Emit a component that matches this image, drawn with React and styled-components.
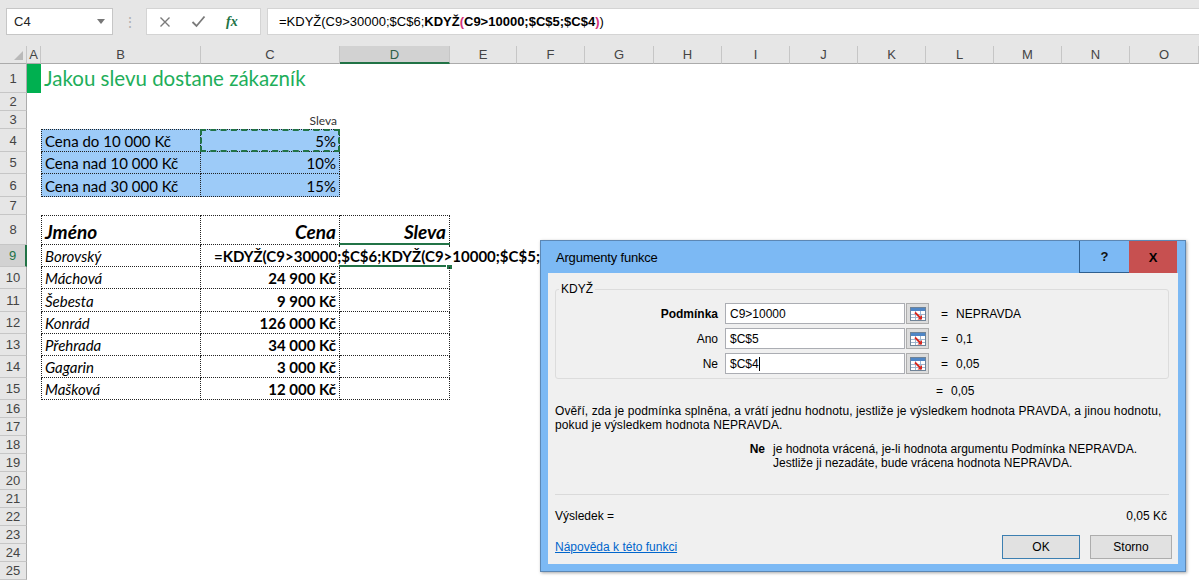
import React from 'react'
import styled, { createGlobalStyle, css } from 'styled-components'

const GlobalStyle = createGlobalStyle`
  html, body { margin: 0; padding: 0; background: #fff; overflow: hidden; }
  body { font-family: "Liberation Sans", Arial, sans-serif; }
`

const COLS = ['A', 'B', 'C', 'D', 'E', 'F', 'G', 'H', 'I', 'J', 'K', 'L', 'M', 'N', 'O']
const COL_WIDTHS = [14, 160, 139, 110, 67, 68, 69, 68, 68, 68, 68, 68, 68, 68, 69]
const ROW_HEIGHTS = [29, 18, 18, 23, 22, 23, 18, 30, 22, 22, 23, 22, 22, 22, 22, 18, 18, 18, 18, 18, 18, 18, 18, 18, 18]
const GREEN = '#217346'
const col = (letter) => COLS.indexOf(letter) + 2

const discounts = [
  ['Cena do 10 000 Kč', '5%'],
  ['Cena nad 10 000 Kč', '10%'],
  ['Cena nad 30 000 Kč', '15%'],
]

const customers = [
  ['Borovský', ''],
  ['Máchová', '24 900 Kč'],
  ['Šebesta', '9 900 Kč'],
  ['Konrád', '126 000 Kč'],
  ['Přehrada', '34 000 Kč'],
  ['Gagarin', '3 000 Kč'],
  ['Mašková', '12 000 Kč'],
]

const Page = styled.div`
  position: relative;
  width: 1199px;
  height: 583px;
  overflow: hidden;
  display: flex;
  flex-direction: column;
  background: #fff;
`

/* formula bar */
const FormulaBar = styled.div`
  flex: none;
  height: 46px;
  box-sizing: border-box;
  padding: 8px 0 0 6px;
  display: flex;
  align-items: flex-start;
  background: #e6e6e6;
`
const NameBox = styled.div`
  width: 107px;
  height: 27px;
  box-sizing: border-box;
  display: flex;
  align-items: center;
  justify-content: space-between;
  padding: 0 7px 0 7px;
  background: #fff;
  border: 1px solid #c6c6c6;
  font-size: 13px;
  color: #222;
`
const Caret = styled.span`
  width: 0;
  height: 0;
  border-left: 4px solid transparent;
  border-right: 4px solid transparent;
  border-top: 5px solid #777;
`
const Grip = styled.div`
  width: 33px;
  height: 27px;
  display: flex;
  align-items: center;
  justify-content: center;
  color: #b0b0b0;
  font-size: 14px;
`
const FxBox = styled.div`
  width: 115px;
  height: 27px;
  box-sizing: border-box;
  display: flex;
  align-items: center;
  padding-left: 12px;
  gap: 20px;
  background: #fff;
  border: 1px solid #d4d4d4;
`
const Fx = styled.span`
  font-family: "Liberation Serif", serif;
  font-style: italic;
  font-weight: 700;
  font-size: 14px;
  color: ${GREEN};
`
const FormulaInput = styled.div`
  flex: 1;
  height: 27px;
  margin-left: 6px;
  box-sizing: border-box;
  display: flex;
  align-items: center;
  padding-left: 11px;
  background: #fff;
  border: 1px solid #d4d4d4;
  border-right: none;
  font-size: 13px;
  color: #000;
  white-space: nowrap;
`
const Strong = styled.b`
  color: ${(p) => p.$color || 'inherit'};
`

/* sheet */
const Sheet = styled.div`
  flex: 1;
  display: grid;
  grid-template-columns: 27px ${COL_WIDTHS.map((w) => w + 'px').join(' ')};
  grid-template-rows: 18px ${ROW_HEIGHTS.map((h) => h + 'px').join(' ')};
  overflow: hidden;
`
const Corner = styled.div`
  grid-column: 1;
  grid-row: 1;
  position: relative;
  background: #e6e6e6;
  border-right: 1px solid #c6c6c6;
  border-bottom: 1px solid #ababab;
  &::after {
    content: '';
    position: absolute;
    right: 3px;
    bottom: 3px;
    border-left: 9px solid transparent;
    border-bottom: 9px solid #b9b9b9;
  }
`
const ColHead = styled.div`
  grid-row: 1;
  grid-column: ${(p) => p.$col};
  box-sizing: border-box;
  display: flex;
  align-items: center;
  justify-content: center;
  font-size: 13px;
  color: ${(p) => (p.$active ? '#2f5f47' : '#444')};
  background: ${(p) => (p.$active ? '#d2d2d2' : '#e6e6e6')};
  border-right: 1px solid #c6c6c6;
  border-bottom: ${(p) => (p.$active ? `2px solid ${GREEN}` : '1px solid #ababab')};
`
const RowHead = styled.div`
  grid-column: 1;
  grid-row: ${(p) => p.$row + 1};
  box-sizing: border-box;
  display: flex;
  align-items: center;
  justify-content: center;
  font-size: 13px;
  color: ${(p) => (p.$active ? GREEN : '#444')};
  background: ${(p) => (p.$active ? '#d2d2d2' : '#e6e6e6')};
  border-bottom: 1px solid #c6c6c6;
  border-right: ${(p) => (p.$active ? `2px solid ${GREEN}` : '1px solid #ababab')};
`
const Cell = styled.div`
  grid-column: ${(p) => p.$col} / span ${(p) => p.$span || 1};
  grid-row: ${(p) => p.$row + 1};
  position: relative;
  box-sizing: border-box;
  min-width: 0;
  display: flex;
  align-items: ${(p) => (p.$middle ? 'center' : 'flex-end')};
  justify-content: ${(p) => (p.$right ? 'flex-end' : 'flex-start')};
  padding: 0 3px 1px 3px;
  white-space: nowrap;
  font-family: Lato, "Open Sans", sans-serif;
  font-size: ${(p) => p.$size || 15}px;
  font-weight: ${(p) => (p.$bold ? 700 : 400)};
  font-style: ${(p) => (p.$italic ? 'italic' : 'normal')};
  color: ${(p) => p.$color || '#000'};
  background: ${(p) => p.$fill || 'transparent'};
  ${(p) => p.$box && css`
    border-right: 1px dotted #222;
    border-bottom: 1px dotted #222;
  `}
  ${(p) => p.$first && css`border-left: 1px dotted #222;`}
  ${(p) => p.$top && css`border-top: 1px dotted #222;`}
  ${(p) => p.$marquee && css`
    &::after {
      content: '';
      position: absolute;
      inset: -1px -1px -1px -1px;
      border: 2px dashed ${GREEN};
    }
  `}
  ${(p) => p.$active && css`
    &::before {
      content: '';
      position: absolute;
      left: -1px;
      right: -1px;
      top: -2px;
      bottom: -1px;
      border-top: 2px solid ${GREEN};
      border-bottom: 2px solid ${GREEN};
    }
    &::after {
      content: '';
      position: absolute;
      right: -4px;
      bottom: -4px;
      width: 5px;
      height: 5px;
      background: ${GREEN};
      border: 1px solid #fff;
    }
  `}
`
const Marker = styled.div`
  grid-column: 2;
  grid-row: 2;
  background: #00b050;
`
const EditText = styled.div`
  grid-column: ${col('C')} / span 4;
  grid-row: 10;
  z-index: 2;
  margin: 2px 45px 2px 10px;
  padding-left: 3px;
  display: flex;
  align-items: flex-end;
  background: #fff;
  white-space: nowrap;
  overflow: hidden;
  font-family: Lato, "Open Sans", sans-serif;
  font-weight: 700;
  font-size: 15px;
`

/* dialog */
const Dialog = styled.div`
  position: absolute;
  left: 540px;
  top: 240px;
  width: 646px;
  height: 332px;
  box-sizing: border-box;
  display: flex;
  flex-direction: column;
  padding: 0 7px 7px 7px;
  background: #7cb9f4;
  border: 1px solid #5c87b4;
  box-shadow: 1px 1px 3px rgba(0, 0, 0, 0.35);
  z-index: 5;
  font-size: 12px;
  color: #000;
`
const TitleBar = styled.div`
  height: 32px;
  display: flex;
  align-items: stretch;
`
const Title = styled.div`
  flex: 1;
  display: flex;
  align-items: center;
  padding-left: 8px;
  font-size: 13px;
  letter-spacing: -0.2px;
`
const TitleButton = styled.div`
  width: ${(p) => (p.$close ? 48 : 50)}px;
  margin-right: ${(p) => (p.$close ? 1 : 0)}px;
  display: flex;
  align-items: center;
  justify-content: center;
  font-weight: 700;
  font-size: 13px;
  color: ${(p) => (p.$close ? '#000' : '#111')};
  background: ${(p) => (p.$close ? '#c75050' : 'transparent')};
  ${(p) => !p.$close && css`
    border-left: 1px solid #2f5f8f;
    border-bottom: 1px solid #2f5f8f;
    box-sizing: border-box;
  `}
`
const Body = styled.div`
  flex: 1;
  display: flex;
  flex-direction: column;
  background: #f0f0f0;
  padding: 0 9px 0 7px;
`
const Group = styled.fieldset`
  margin: 9px 0 0 0;
  padding: 7px 0 4px 0;
  border: 1px solid #dcdcdc;
  border-radius: 3px;
  min-width: 0;
`
const Legend = styled.legend`
  margin-left: 3px;
  padding: 0 2px;
  font-size: 12px;
`
const ArgRow = styled.div`
  display: flex;
  align-items: center;
  height: 21px;
  & + & {
    margin-top: 4px;
  }
`
const ArgLabel = styled.div`
  width: 162px;
  margin-right: 7px;
  text-align: right;
  font-weight: ${(p) => (p.$bold ? 700 : 400)};
`
const ArgInput = styled.div`
  width: 180px;
  height: 21px;
  box-sizing: border-box;
  display: flex;
  align-items: center;
  padding-left: 4px;
  background: #fff;
  border: 1px solid #abadb3;
`
const Cursor = styled.span`
  display: inline-block;
  width: 1px;
  height: 14px;
  background: #000;
`
const RefButton = styled.div`
  width: 23px;
  height: 21px;
  margin-left: 1px;
  box-sizing: border-box;
  display: flex;
  align-items: center;
  justify-content: center;
  background: #dcdcdc;
  border: 1px solid #adadad;
`
const Eq = styled.div`
  margin-left: ${(p) => p.$offset ?? 12}px;
  width: 15px;
`
const ResultLine = styled.div`
  display: flex;
  margin-top: 5px;
  padding-left: 381px;
  height: 14px;
`
const Description = styled.div`
  margin-top: 6px;
  line-height: 14px;
  letter-spacing: 0.1px;
`
const ArgHelp = styled.div`
  display: grid;
  grid-template-columns: 24px auto;
  margin: 10px 0 0 194px;
  line-height: 14px;
`
const HelpName = styled.b`
  text-align: right;
  padding-right: 8px;
`
const Divider = styled.div`
  margin: 24px 0 0 0;
  border-top: 1px solid #dadada;
`
const ResultRow = styled.div`
  display: flex;
  justify-content: space-between;
  margin-top: 14px;
  padding-right: 2px;
`
const Footer = styled.div`
  display: flex;
  align-items: center;
  margin: 12px -3px 0 0;
`
const HelpLink = styled.a`
  flex: 1;
  color: #0066cc;
  text-decoration: underline;
`
const Button = styled.div`
  width: ${(p) => (p.$primary ? 78 : 82)}px;
  height: 24px;
  box-sizing: border-box;
  margin-left: ${(p) => (p.$primary ? 0 : 10)}px;
  display: flex;
  align-items: center;
  justify-content: center;
  background: #e1e1e1;
  border: 1px solid ${(p) => (p.$primary ? '#3c7fb1' : '#adadad')};
`

const CancelIcon = () => (
  <svg width="12" height="12" viewBox="0 0 12 12">
    <path d="M1.5 1.5L10.5 10.5M10.5 1.5L1.5 10.5" stroke="#7a7a7a" strokeWidth="1.4" />
  </svg>
)

const CheckIcon = () => (
  <svg width="15" height="13" viewBox="0 0 15 13">
    <path d="M1.5 7L5.5 11L13.5 1.5" fill="none" stroke="#7a7a7a" strokeWidth="1.8" />
  </svg>
)

const RefIcon = () => (
  <svg width="16" height="14" viewBox="0 0 16 14">
    <rect x="0.5" y="0.5" width="15" height="13" fill="#fff" stroke="#6f8397" />
    <rect x="1" y="1" width="14" height="3" fill="#4f86c6" />
    <path d="M1 7.5H15M1 10.5H15M5.5 4V13M10.5 4V13" stroke="#9fb6cf" strokeWidth="1" />
    <path d="M5 5.5L10 10.5" stroke="#d8261e" strokeWidth="1.8" />
    <path d="M12 12.5H7.5L12 8Z" fill="#d8261e" />
  </svg>
)

const App = () => {
  const rowNumbers = ROW_HEIGHTS.map((_, i) => i + 1)

  return (
    <Page>
      <GlobalStyle />
      <FormulaBar>
        <NameBox>
          <span>C4</span>
          <Caret />
        </NameBox>
        <Grip>⋮</Grip>
        <FxBox>
          <CancelIcon />
          <CheckIcon />
          <Fx>fx</Fx>
        </FxBox>
        <FormulaInput>
          =KDYŽ(C9&gt;30000;$C$6;<Strong>KDYŽ</Strong>
          <Strong $color="#d4327c">(</Strong>
          <Strong>C9&gt;10000;$C$5;$C$4</Strong>
          <Strong $color="#d4327c">)</Strong>)
        </FormulaInput>
      </FormulaBar>

      <Sheet>
        <Corner />
        {COLS.map((c) => (
          <ColHead key={c} $col={col(c)} $active={c === 'D'}>{c}</ColHead>
        ))}
        {rowNumbers.map((n) => (
          <RowHead key={n} $row={n} $active={n === 9}>{n}</RowHead>
        ))}

        <Marker />
        <Cell $col={col('B')} $row={1} $span={4} $size={20.5} $color="#1eae5a" $middle>
          Jakou slevu dostane zákazník
        </Cell>
        <Cell $col={col('C')} $row={3} $right $size={12} $color="#333">Sleva</Cell>

        {discounts.map(([label, value], i) => (
          <React.Fragment key={label}>
            <Cell $col={col('B')} $row={4 + i} $fill="#9dcbf8" $box $first $top={i === 0}>{label}</Cell>
            <Cell $col={col('C')} $row={4 + i} $fill="#9dcbf8" $right $box $top={i === 0} $marquee={i === 0}>
              {value}
            </Cell>
          </React.Fragment>
        ))}

        <Cell $col={col('B')} $row={8} $size={19} $bold $italic $box $first $top>Jméno</Cell>
        <Cell $col={col('C')} $row={8} $size={19} $bold $italic $right $box $top>Cena</Cell>
        <Cell $col={col('D')} $row={8} $size={19} $bold $italic $right $box $top>Sleva</Cell>
        {customers.map(([name, price], i) => (
          <React.Fragment key={name}>
            <Cell $col={col('B')} $row={9 + i} $italic $box $first>{name}</Cell>
            <Cell $col={col('C')} $row={9 + i} $bold $right $box>{price}</Cell>
            <Cell $col={col('D')} $row={9 + i} $box $active={i === 0} />
          </React.Fragment>
        ))}
        <EditText>=KDYŽ(C9&gt;30000;$C$6;KDYŽ(C9&gt;10000;$C$5;$C$4))</EditText>
      </Sheet>

      <Dialog>
        <TitleBar>
          <Title>Argumenty funkce</Title>
          <TitleButton>?</TitleButton>
          <TitleButton $close>X</TitleButton>
        </TitleBar>
        <Body>
          <Group>
            <Legend>KDYŽ</Legend>
            <ArgRow>
              <ArgLabel $bold>Podmínka</ArgLabel>
              <ArgInput>C9&gt;10000</ArgInput>
              <RefButton><RefIcon /></RefButton>
              <Eq>=</Eq>
              <span>NEPRAVDA</span>
            </ArgRow>
            <ArgRow>
              <ArgLabel>Ano</ArgLabel>
              <ArgInput>$C$5</ArgInput>
              <RefButton><RefIcon /></RefButton>
              <Eq>=</Eq>
              <span>0,1</span>
            </ArgRow>
            <ArgRow>
              <ArgLabel>Ne</ArgLabel>
              <ArgInput>$C$4<Cursor /></ArgInput>
              <RefButton><RefIcon /></RefButton>
              <Eq>=</Eq>
              <span>0,05</span>
            </ArgRow>
          </Group>
          <ResultLine>
            <Eq $offset={0}>=</Eq>
            <span>0,05</span>
          </ResultLine>
          <Description>
            Ověří, zda je podmínka splněna, a vrátí jednu hodnotu, jestliže je výsledkem hodnota PRAVDA, a jinou hodnotu,
            <br />
            pokud je výsledkem hodnota NEPRAVDA.
          </Description>
          <ArgHelp>
            <HelpName>Ne</HelpName>
            <span>
              je hodnota vrácená, je-li hodnota argumentu Podmínka NEPRAVDA.
              <br />
              Jestliže ji nezadáte, bude vrácena hodnota NEPRAVDA.
            </span>
          </ArgHelp>
          <Divider />
          <ResultRow>
            <span>Výsledek =</span>
            <span>0,05 Kč</span>
          </ResultRow>
          <Footer>
            <HelpLink>Nápověda k této funkci</HelpLink>
            <Button $primary>OK</Button>
            <Button>Storno</Button>
          </Footer>
        </Body>
      </Dialog>
    </Page>
  )
}

export default App
